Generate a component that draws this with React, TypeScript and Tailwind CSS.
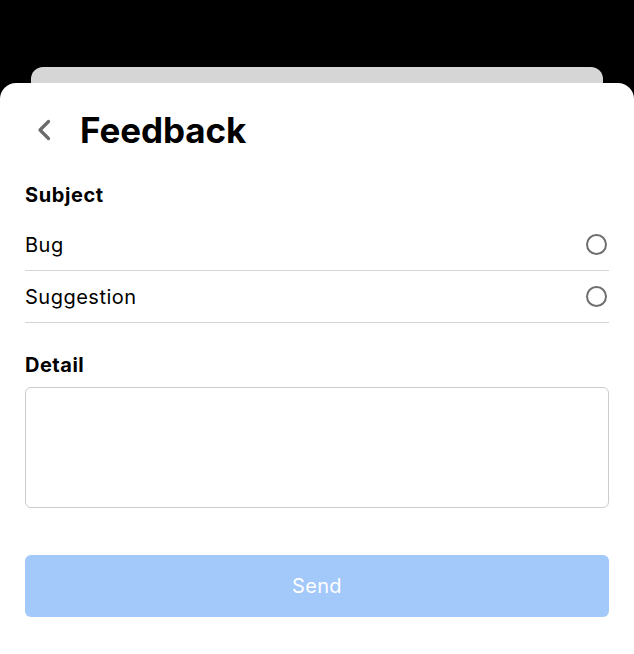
import React from 'react';

const options = ['Bug', 'Suggestion'];

const Radio: React.FC = () => (
  <span className="w-[21px] h-[21px] rounded-full border-2 border-[#6e6e6e] mr-[2px]" />
);

const App: React.FC = () => {
  return (
    <div className="h-[654px] bg-black overflow-hidden font-['Inter',sans-serif] text-black">
      <div className="mt-[67px] mx-[31px] h-[16px] bg-[#d6d6d6] rounded-t-[12px]" />
      <div className="bg-white rounded-t-[16px] h-[571px] px-[25px] pt-[26px]">
        <div className="flex items-center h-[42px]">
          <svg width="14" height="22" viewBox="0 0 14 22" className="ml-[12px] mr-[29px]">
            <path d="M11.5 2.5 L3 11 L11.5 19.5" fill="none" stroke="#6b6b6b" strokeWidth="3.2" strokeLinecap="round" strokeLinejoin="round" />
          </svg>
          <h1 className="text-[35px] leading-[42px] font-bold tracking-[-0.1px]">Feedback</h1>
        </div>

        <h2 className="mt-[30px] text-[20px] leading-[28px] font-bold tracking-[0.6px]">Subject</h2>
        <div className="mt-[10px]">
          {options.map((o) => (
            <div key={o} className="flex items-center justify-between h-[52px] border-b border-[#d4d4d4]">
              <span className="text-[20px] leading-[28px] tracking-[0.5px]">{o}</span>
              <Radio />
            </div>
          ))}
        </div>

        <h2 className="mt-[28px] text-[20px] leading-[28px] font-bold tracking-[0.5px]">Detail</h2>
        <textarea className="mt-[8px] block w-full h-[121px] border border-[#cccccc] rounded-[6px] resize-none outline-none p-3 text-[18px]" />

        <button className="mt-[47px] w-full h-[62px] rounded-[6px] bg-[#a3c8fa] text-white text-[20px] tracking-[0.3px]">
          Send
        </button>
      </div>
    </div>
  );
};

export default App;
